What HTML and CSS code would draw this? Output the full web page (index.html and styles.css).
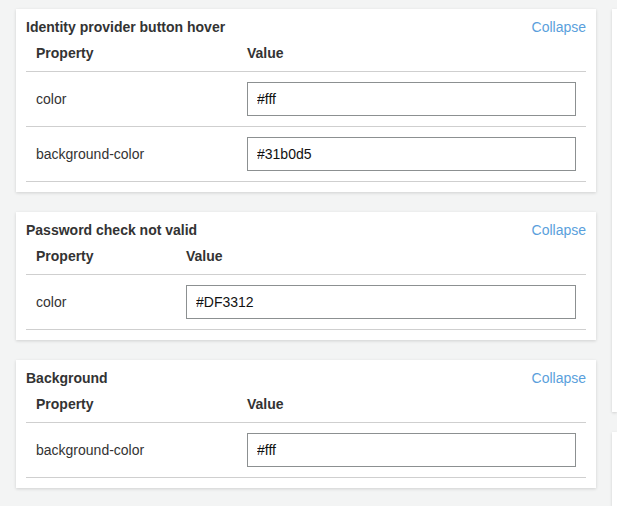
FILE: index.html
```html
<!DOCTYPE html>
<html lang="en">
<head>
    <meta charset="UTF-8">
    <meta name="viewport" content="width=device-width, initial-scale=1.0">
    <title>Theme Editor</title>
    <link rel="stylesheet" href="styles.css">
</head>
<body>
    <div class="layout">
        <div class="main">
            <div class="card">
                <div class="card-head">
                    <h3>Identity provider button hover</h3>
                    <a href="#" class="collapse">Collapse</a>
                </div>
                <table class="props">
                    <colgroup><col class="col-wide"><col></colgroup>
                    <tr><th>Property</th><th>Value</th></tr>
                    <tr><td>color</td><td><input type="text" value="#fff"></td></tr>
                    <tr><td>background-color</td><td><input type="text" value="#31b0d5"></td></tr>
                </table>
            </div>

            <div class="card">
                <div class="card-head">
                    <h3>Password check not valid</h3>
                    <a href="#" class="collapse">Collapse</a>
                </div>
                <table class="props">
                    <colgroup><col class="col-narrow"><col></colgroup>
                    <tr><th>Property</th><th>Value</th></tr>
                    <tr><td>color</td><td><input type="text" value="#DF3312"></td></tr>
                </table>
            </div>

            <div class="card">
                <div class="card-head">
                    <h3>Background</h3>
                    <a href="#" class="collapse">Collapse</a>
                </div>
                <table class="props">
                    <colgroup><col class="col-wide"><col></colgroup>
                    <tr><th>Property</th><th>Value</th></tr>
                    <tr><td>background-color</td><td><input type="text" value="#fff"></td></tr>
                </table>
            </div>
        </div>
        <div class="side">
            <div class="panel panel-tall"></div>
            <div class="panel"></div>
        </div>
    </div>
</body>
</html>
```
FILE: styles.css
```css
body {
    margin: 0;
    background: #f3f4f4;
    color: #333;
    font-family: "Liberation Sans", Arial, sans-serif;
    font-size: 14px;
    overflow: hidden;
}
.layout {
    display: flex;
    gap: 16px;
    padding: 9px 0 0 16px;
}
.main {
    width: 580px;
    flex-shrink: 0;
}
.card {
    background: #fff;
    padding: 10px;
    margin-bottom: 20px;
    box-shadow: 0 1px 3px rgba(0, 0, 0, 0.15);
}
.card:last-child {
    margin-bottom: 0;
}
.card-head {
    display: flex;
    justify-content: space-between;
    align-items: center;
    height: 16px;
}
.card-head h3 {
    margin: 0;
    font-size: 14px;
    line-height: 16px;
    font-weight: bold;
}
.collapse {
    color: #5a9fdc;
    text-decoration: none;
    line-height: 16px;
}
.props {
    width: 100%;
    border-collapse: collapse;
    table-layout: fixed;
}
.col-wide {
    width: 211px;
}
.col-narrow {
    width: 150px;
}
.props th, .props td {
    padding: 10px;
    line-height: 16px;
    text-align: left;
    border-bottom: 1px solid #cfcfcf;
}
.props th {
    font-weight: bold;
}
.props input {
    box-sizing: border-box;
    width: 100%;
    height: 34px;
    margin: 0;
    padding: 0 9px;
    border: 1px solid #8c9091;
    font-family: "Liberation Sans", Arial, sans-serif;
    font-size: 14px;
    color: #111;
    display: block;
}
.side {
    flex: 1;
    display: flex;
    flex-direction: column;
    gap: 20px;
}
.panel {
    background: #fff;
    height: 74px;
    box-shadow: 0 1px 3px rgba(0, 0, 0, 0.15);
}
.panel-tall {
    height: 403px;
}
```
